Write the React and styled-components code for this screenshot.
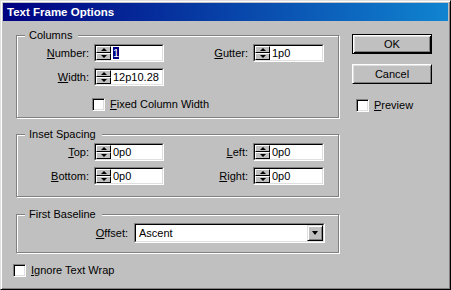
import React from 'react';
import styled, { createGlobalStyle } from 'styled-components';

const Global = createGlobalStyle`
  html, body { margin: 0; padding: 0; background: #c0c0c0; }
  body { font-family: "Liberation Sans", Arial, sans-serif; font-size: 11px; color: #000; }
  * { box-sizing: border-box; }
`;

const Window = styled.div`
  width: 451px;
  height: 290px;
  background: #c0c0c0;
  border: 1px solid;
  border-color: #dfdfdf #000 #000 #dfdfdf;
  box-shadow: inset 1px 1px #fff, inset -1px -1px #808080;
  padding: 2px;
  display: flex;
  flex-direction: column;
`;

const TitleBar = styled.div`
  height: 18px;
  flex: none;
  background: linear-gradient(90deg, #000080 0%, #1084d0 100%);
  color: #fff;
  font-weight: bold;
  font-size: 11.5px;
  line-height: 18px;
  padding-left: 4px;
  white-space: nowrap;
`;

const Body = styled.div`
  display: flex;
  padding: 8px 0 0 10px;
  gap: 13px;
`;

const LeftCol = styled.div`
  width: 326px;
  display: flex;
  flex-direction: column;
`;

const Group = styled.fieldset`
  margin: ${p => p.$mt || 0}px 0 0 3px;
  width: 323px;
  min-width: 0;
  border: 1px solid #808080;
  box-shadow: inset 1px 1px #fff, 1px 1px #fff;
  padding: ${p => p.$pt}px 0 ${p => p.$pb}px 0;
`;

const Legend = styled.legend`
  margin-left: 8px;
  padding: 0 6px 0 4px;
  line-height: 13px;
  font-size: 11px;
  background: #c0c0c0;
`;

const FieldGrid = styled.div`
  display: grid;
  grid-template-columns: 72px 70px 79px 71px;
  column-gap: 5px;
  row-gap: 6px;
  align-items: center;
`;

const Label = styled.span`
  text-align: right;
  white-space: nowrap;
  line-height: 13px;
`;

const Key = styled.span`
  text-decoration: underline;
  text-underline-offset: 1px;
`;

const Field = styled.div`
  display: flex;
  height: 18px;
  border: 1px solid;
  border-color: #808080 #fff #fff #808080;
`;

const FieldInner = styled.div`
  flex: 1;
  display: flex;
  border: 1px solid;
  border-color: #000 #dfdfdf #dfdfdf #000;
  background: #fff;
  min-width: 0;
`;

const Spin = styled.div`
  width: 15px;
  flex: none;
  display: flex;
  flex-direction: column;
`;

const SpinBtn = styled.div`
  flex: 1;
  display: flex;
  align-items: center;
  justify-content: center;
  background: #c0c0c0;
  border: 1px solid;
  border-color: #fff #000 #000 #fff;
`;

const Arrow = styled.div`
  width: 0;
  height: 0;
  border-left: ${p => p.$w || 3}px solid transparent;
  border-right: ${p => p.$w || 3}px solid transparent;
  ${p => (p.$up ? 'border-bottom' : 'border-top')}: ${p => p.$h || 3}px solid #000;
`;

const Input = styled.div`
  flex: 1;
  padding-left: 2px;
  line-height: 14px;
  white-space: nowrap;
  overflow: hidden;
`;

const Selected = styled.span`
  background: #000080;
  color: #fff;
`;

const CheckRow = styled.div`
  display: flex;
  align-items: center;
  gap: 5px;
  line-height: 13px;
  white-space: nowrap;
  margin: ${p => p.$m || '0'};
  grid-column: ${p => p.$col || 'auto'};
`;

const Box = styled.div`
  width: 13px;
  height: 13px;
  flex: none;
  background: #fff;
  border: 1px solid;
  border-color: #808080 #fff #fff #808080;
  box-shadow: inset 1px 1px #000, inset -1px -1px #dfdfdf;
`;

const BaselineRow = styled.div`
  display: flex;
  justify-content: flex-end;
  align-items: center;
  gap: 6px;
  padding-right: 13px;
`;

const Select = styled.div`
  width: 191px;
  height: 20px;
  display: flex;
  border: 1px solid;
  border-color: #808080 #fff #fff #808080;
`;

const SelectInner = styled.div`
  flex: 1;
  display: flex;
  align-items: center;
  background: #fff;
  border: 1px solid;
  border-color: #000 #dfdfdf #dfdfdf #000;
`;

const SelectText = styled.div`
  flex: 1;
  padding-left: 3px;
`;

const DropBtn = styled.div`
  width: 16px;
  height: 16px;
  display: flex;
  align-items: center;
  justify-content: center;
  background: #c0c0c0;
  border: 1px solid;
  border-color: #dfdfdf #000 #000 #dfdfdf;
  box-shadow: inset 1px 1px #fff, inset -1px -1px #808080;
`;

const RightCol = styled.div`
  width: 80px;
  display: flex;
  flex-direction: column;
  gap: 10px;
  padding-top: 5px;
`;

const Button = styled.div`
  height: 20px;
  display: flex;
  align-items: center;
  justify-content: center;
  background: #c0c0c0;
  border: 1px solid;
  border-color: ${p => (p.$default ? '#000' : '#fff #000 #000 #fff')};
  box-shadow: ${p =>
    p.$default
      ? 'inset 1px 1px #fff, inset -1px -1px #000, inset 2px 2px #dfdfdf, inset -2px -2px #808080'
      : 'inset 1px 1px #dfdfdf, inset -1px -1px #808080'};
`;

const SpinField = ({ children }) => (
  <Field>
    <FieldInner>
      <Spin>
        <SpinBtn><Arrow $up /></SpinBtn>
        <SpinBtn><Arrow /></SpinBtn>
      </Spin>
      <Input>{children}</Input>
    </FieldInner>
  </Field>
);

const Lbl = ({ k, rest }) => (
  <Label><Key>{k}</Key>{rest}</Label>
);

export default function App() {
  return (
    <>
      <Global />
      <Window>
        <TitleBar>Text Frame Options</TitleBar>
        <Body>
          <LeftCol>
            <Group $pt={2} $pb={6}>
              <Legend>Columns</Legend>
              <FieldGrid>
                <Lbl k="N" rest="umber:" />
                <SpinField><Selected>1</Selected></SpinField>
                <Lbl k="G" rest="utter:" />
                <SpinField>1p0</SpinField>
                <Lbl k="W" rest="idth:" />
                <SpinField>12p10.28</SpinField>
                <span />
                <span />
                <CheckRow $col="2 / span 3" $m="6px 0 0 -2px">
                  <Box />
                  <span><Key>F</Key>ixed Column Width</span>
                </CheckRow>
              </FieldGrid>
            </Group>
            <Group $mt={10} $pt={2} $pb={11}>
              <Legend>Inset Spacing</Legend>
              <FieldGrid>
                <Lbl k="T" rest="op:" />
                <SpinField>0p0</SpinField>
                <Lbl k="L" rest="eft:" />
                <SpinField>0p0</SpinField>
                <Lbl k="B" rest="ottom:" />
                <SpinField>0p0</SpinField>
                <Lbl k="R" rest="ight:" />
                <SpinField>0p0</SpinField>
              </FieldGrid>
            </Group>
            <Group $mt={11} $pt={2} $pb={9}>
              <Legend>First Baseline</Legend>
              <BaselineRow>
                <Lbl k="O" rest="ffset:" />
                <Select>
                  <SelectInner>
                    <SelectText>Ascent</SelectText>
                    <DropBtn><Arrow $w={3.5} $h={4} /></DropBtn>
                  </SelectInner>
                </Select>
              </BaselineRow>
            </Group>
            <CheckRow $m="11px 0 0 0">
              <Box />
              <span><Key>I</Key>gnore Text Wrap</span>
            </CheckRow>
          </LeftCol>
          <RightCol>
            <Button $default>OK</Button>
            <Button>Cancel</Button>
            <CheckRow $m="5px 0 0 4px">
              <Box />
              <span><Key>P</Key>review</span>
            </CheckRow>
          </RightCol>
        </Body>
      </Window>
    </>
  );
}
